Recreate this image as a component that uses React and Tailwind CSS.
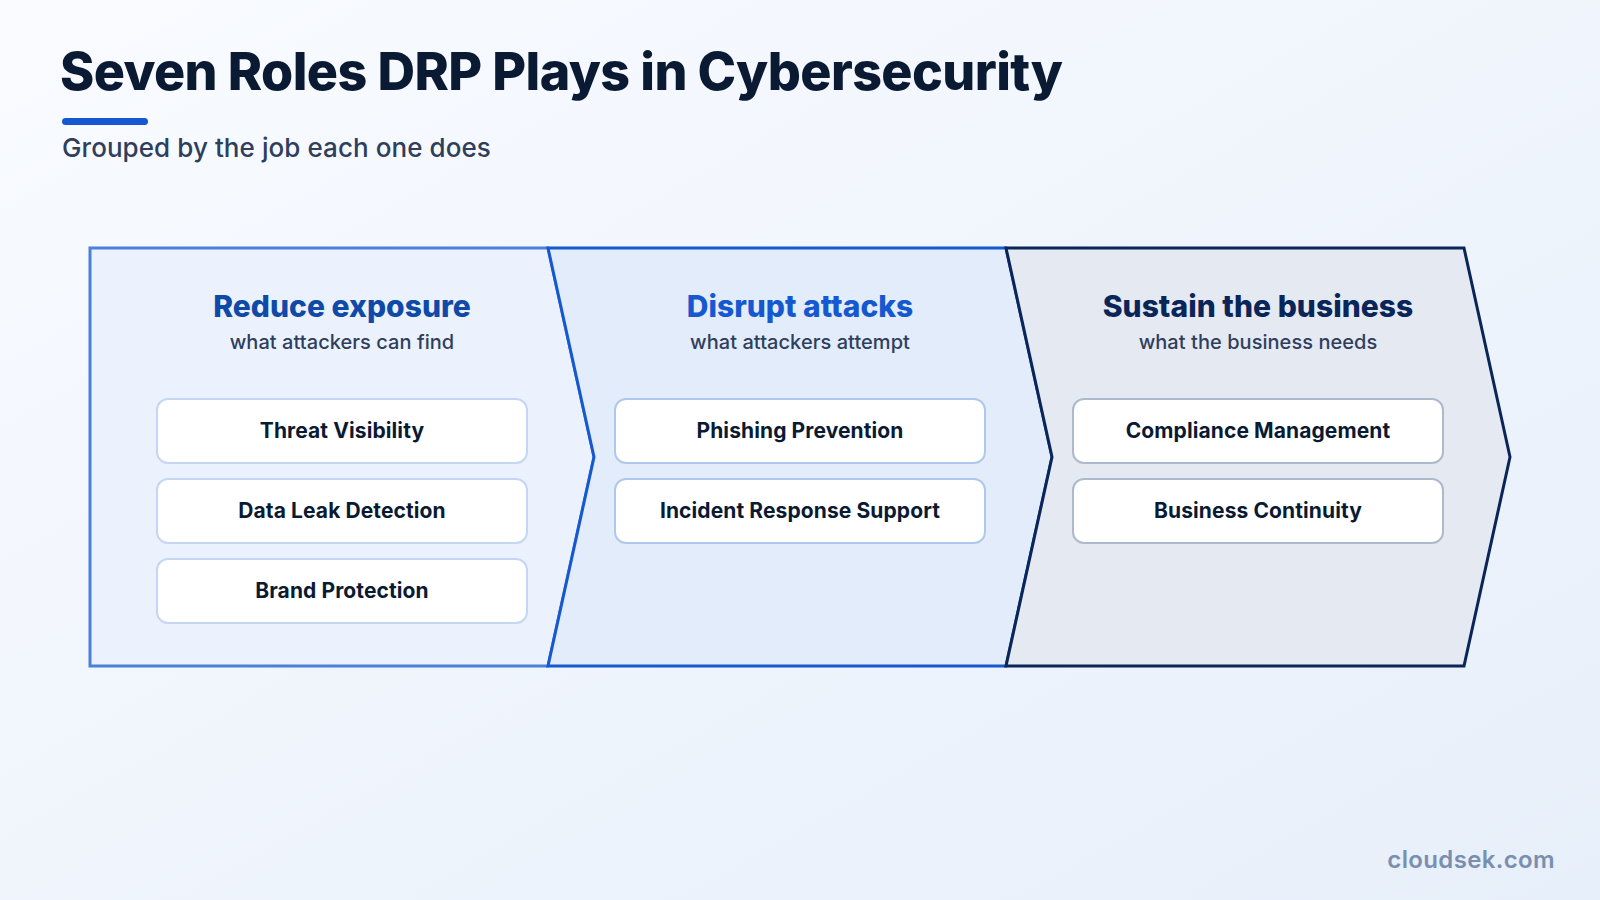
const W = 458;
const H = 418;
const TIP = 46;

const columns = [
  {
    title: 'Reduce exposure',
    sub: 'what attackers can find',
    titleClass: 'text-[#0f4aa8]',
    cardClass: 'border-[#c4d6f4]',
    fill: '#ebf2fd',
    stroke: '#4a7fdc',
    items: ['Threat Visibility', 'Data Leak Detection', 'Brand Protection'],
    first: true,
  },
  {
    title: 'Disrupt attacks',
    sub: 'what attackers attempt',
    titleClass: 'text-[#1558cf]',
    cardClass: 'border-[#b0c7ec]',
    fill: '#e2ecfb',
    stroke: '#1558cf',
    items: ['Phishing Prevention', 'Incident Response Support'],
  },
  {
    title: 'Sustain the business',
    sub: 'what the business needs',
    titleClass: 'text-[#0a2558]',
    cardClass: 'border-[#aeb9cd]',
    fill: '#e5e9f2',
    stroke: '#0a2558',
    items: ['Compliance Management', 'Business Continuity'],
  },
];

function ChevronShape({ fill, stroke, first }) {
  const notch = first ? 0 : TIP;
  const d = `M0 0 H${W} L${W + TIP} ${H / 2} L${W} ${H} H0 L${notch} ${H / 2} Z`;
  return (
    <svg
      className="absolute left-0 top-0 overflow-visible"
      width={W + TIP}
      height={H}
      viewBox={`0 0 ${W + TIP} ${H}`}
    >
      <path d={d} fill={fill} stroke={stroke} strokeWidth="3" strokeLinejoin="miter" />
    </svg>
  );
}

function Column({ col }) {
  return (
    <div className="relative w-[458px] h-[418px] pl-[66px] pr-5">
      <ChevronShape fill={col.fill} stroke={col.stroke} first={col.first} />
      <div className="relative flex flex-col items-center pt-[39px]">
        <h2 className={`text-[30px] leading-[38px] font-extrabold tracking-[0.03px] ${col.titleClass}`}>{col.title}</h2>
        <p className="mt-px text-[20px] leading-[32px] font-medium tracking-[0.05px] text-[#2f3e5c]">{col.sub}</p>
        <div className="mt-[40px] w-full flex flex-col gap-[14px]">
          {col.items.map((item) => (
            <div
              key={item}
              className={`h-[66px] rounded-xl border-2 bg-white flex items-center justify-center text-[21px] font-bold tracking-[0.1px] text-[#0a1a33] ${col.cardClass}`}
            >
              {item}
            </div>
          ))}
        </div>
      </div>
    </div>
  );
}

export default function App() {
  return (
    <div className="w-[1600px] h-[900px] overflow-hidden flex flex-col bg-gradient-to-br from-[#f9fbff] to-[#e7effa] font-['Inter',sans-serif]">
      <div className="pl-[60px] pt-10">
        <h1 className="text-[52px] leading-[64px] font-extrabold tracking-[-0.6px] text-[#0a1a33]">
          Seven Roles DRP Plays in Cybersecurity
        </h1>
        <div className="mt-[14px] ml-[2px] w-[86px] h-[7px] rounded-full bg-[#1558cf]" />
        <p className="mt-[7px] ml-[2px] text-[26px] leading-[32px] font-medium tracking-[0.07px] text-[#2f3e5c]">
          Grouped by the job each one does
        </p>
      </div>
      <div className="mt-[84px] pl-[90px] flex">
        {columns.map((col) => (
          <Column key={col.title} col={col} />
        ))}
      </div>
      <div className="mt-auto pb-6 pr-[45px] self-end text-[24px] leading-[32px] font-semibold tracking-[0.35px] text-[#7a8fb0]">
        cloudsek.com
      </div>
    </div>
  );
}
